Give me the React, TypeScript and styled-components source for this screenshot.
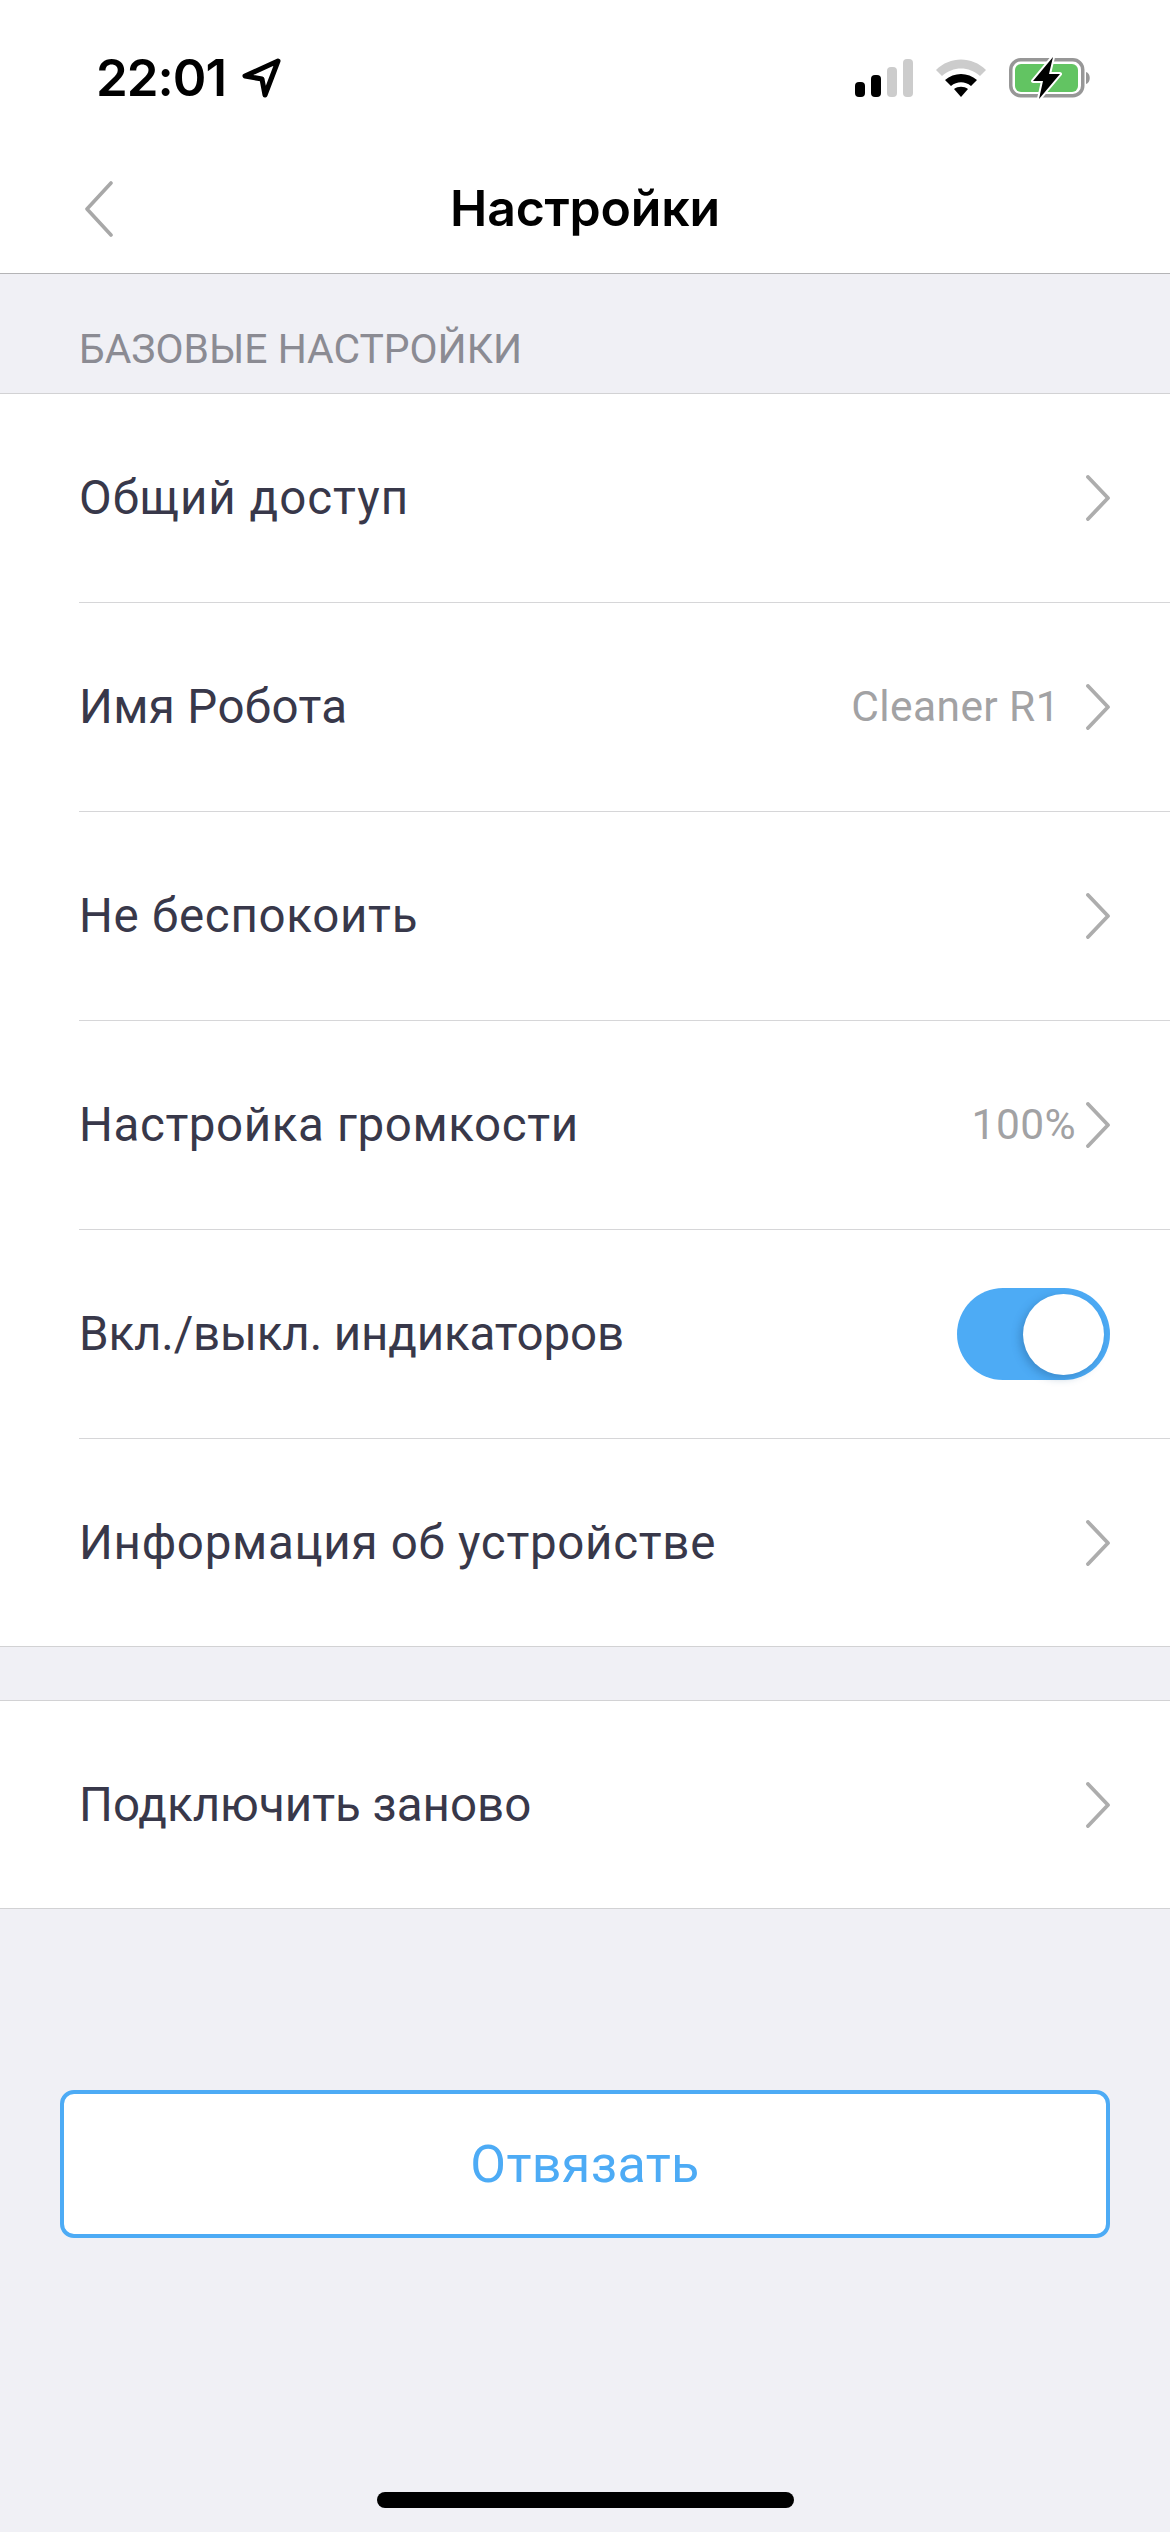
import React from "react";
import styled, { createGlobalStyle } from "styled-components";

const Global = createGlobalStyle`
  html, body { margin: 0; padding: 0; background: #f0f0f5; }
  * { box-sizing: border-box; }
`;

const Page = styled.div`
  width: 1170px;
  height: 2532px;
  background: #f0f0f5;
  display: flex;
  flex-direction: column;
  position: relative;
  overflow: hidden;
  font-family: Roboto, "Liberation Sans", sans-serif;
`;

const Header = styled.header`
  background: #fff;
  height: 274px;
  border-bottom: 1px solid #b4b4b6;
  display: flex;
  flex-direction: column;
`;

const StatusBar = styled.div`
  height: 156px;
  padding: 57px 79px 0 96px;
  display: flex;
  align-items: flex-start;
  justify-content: space-between;
`;

const TimeGroup = styled.div`
  display: flex;
  align-items: center;
  gap: 15px;
  height: 41px;
`;

const Time = styled.span`
  font-family: Inter, sans-serif;
  font-weight: 600;
  font-size: 51px;
  letter-spacing: -1px;
  color: #000;
  line-height: 41px;
`;

const StatusIcons = styled.div`
  display: flex;
  align-items: center;
  height: 41px;
  gap: 22px;
`;

const NavBar = styled.div`
  flex: 1;
  position: relative;
  display: flex;
  align-items: center;
  justify-content: center;
  padding-bottom: 14px;
`;

const Title = styled.h1`
  margin: 0;
  font-family: Inter, sans-serif;
  font-weight: 600;
  font-size: 50px;
  letter-spacing: -0.2px;
  line-height: 56px;
  color: #000;
`;

const BackIcon = styled.svg`
  position: absolute;
  left: 84px;
  top: 25px;
`;

const SectionLabel = styled.div`
  height: 119px;
  padding: 52px 0 0 79px;
  font-size: 40.8px;
  line-height: 46px;
  color: #8b8b93;
  background: #f0f0f5;
`;

const Group = styled.section<{ $mt?: number }>`
  background: #fff;
  border-top: 1px solid #d2d2d4;
  border-bottom: 1px solid #d2d2d4;
  margin-top: ${(p) => p.$mt ?? 0}px;
  padding-left: 79px;
`;

const Row = styled.div`
  height: 209px;
  display: flex;
  align-items: center;
  padding-right: 60px;
  border-bottom: 1px solid #d6d6d8;
  &:last-child { border-bottom: none; height: 207px; }
`;

const Label = styled.span<{ $track: number }>`
  flex: 1;
  font-size: 47.5px;
  line-height: 56px;
  color: #38384a;
  letter-spacing: ${(p) => p.$track}px;
`;

const Value = styled.span<{ $gap: number }>`
  font-size: 42.5px;
  line-height: 50px;
  color: #a2a2a4;
  letter-spacing: 0.4px;
  margin-right: ${(p) => p.$gap}px;
`;

const Toggle = styled.div`
  width: 153px;
  height: 92px;
  border-radius: 46px;
  background: #4dabf5;
  display: flex;
  align-items: center;
  justify-content: flex-end;
  padding-right: 6px;
`;

const Knob = styled.div`
  width: 81px;
  height: 81px;
  border-radius: 50%;
  background: #fff;
  box-shadow: -3px 3px 8px rgba(30, 80, 130, 0.35);
`;

const ButtonWrap = styled.div`
  padding: 181px 60px 0;
`;

const UnbindButton = styled.button`
  width: 100%;
  height: 148px;
  background: #fff;
  border: 4px solid #4dabf5;
  border-radius: 14px;
  color: #4dabf5;
  font-family: Roboto, sans-serif;
  font-size: 52px;
  letter-spacing: 0.35px;
  padding: 0;
`;

const HomeBar = styled.div`
  position: absolute;
  left: 377px;
  top: 2492px;
  width: 417px;
  height: 16px;
  border-radius: 8px;
  background: #000;
`;

const Chevron = () => (
  <svg width="24" height="46" viewBox="0 0 24 46" fill="none">
    <path d="M2 2 L22 23 L2 44" stroke="#adadad" strokeWidth="3.8" strokeLinecap="round" strokeLinejoin="round" />
  </svg>
);

const rows: { label: string; track: number; value?: string; gap?: number }[] = [
  { label: "Общий доступ", track: 1 },
  { label: "Имя Робота", track: 0.35, value: "Cleaner R1", gap: 26 },
  { label: "Не беспокоить", track: 0.7 },
  { label: "Настройка громкости", track: 0.6, value: "100%", gap: 10 },
];

export default function App() {
  return (
    <Page>
      <Global />
      <Header>
        <StatusBar>
          <TimeGroup>
            <Time>22:01</Time>
            <svg width="42" height="42" viewBox="0 0 42 42" fill="none">
              <path d="M37 4 L4 19 L21 22 L24 38 Z" stroke="#000" strokeWidth="5" strokeLinejoin="round" />
            </svg>
          </TimeGroup>
          <StatusIcons>
            <svg width="58" height="38" viewBox="0 0 58 38">
              <rect x="0" y="23" width="10" height="15" rx="4" fill="#000" />
              <rect x="16" y="16" width="10" height="22" rx="4" fill="#000" />
              <rect x="32" y="8" width="10" height="30" rx="4" fill="#ccc" />
              <rect x="48" y="0" width="10" height="38" rx="4" fill="#ccc" />
            </svg>
            <svg width="52" height="38" viewBox="0 0 52 38">
              <path d="M1 11 C15 -3 37 -3 51 11 L45 17 C34 7 18 7 7 17 Z" fill="#ccc" />
              <path d="M10 21 C19 13 33 13 42 21 L36 27 C30 22 22 22 16 27 Z" fill="#000" />
              <path d="M19 30 C23 27 29 27 33 30 L26 38 Z" fill="#000" />
            </svg>
            <svg width="82" height="44" viewBox="0 0 82 44">
              <rect x="1.75" y="3.75" width="72" height="36" rx="10" fill="none" stroke="#979797" strokeWidth="3.5" />
              <rect x="6" y="8" width="63" height="28" rx="6" fill="#62c462" />
              <path d="M77 16 C82 17 82 27 77 28 Z" fill="#979797" />
              <path d="M44 1 L24 25 L34 25 L30 43 L51 18 L40 18 Z" fill="#000" stroke="#fff" strokeWidth="4" strokeLinejoin="round" paintOrder="stroke" />
            </svg>
          </StatusIcons>
        </StatusBar>
        <NavBar>
          <BackIcon width="30" height="56" viewBox="0 0 30 56" fill="none">
            <path d="M27 2 L3 28 L27 54" stroke="#a8a8a8" strokeWidth="3.6" strokeLinecap="round" strokeLinejoin="round" />
          </BackIcon>
          <Title>Настройки</Title>
        </NavBar>
      </Header>
      <SectionLabel>БАЗОВЫЕ НАСТРОЙКИ</SectionLabel>
      <Group>
        {rows.map((r) => (
          <Row key={r.label}>
            <Label $track={r.track}>{r.label}</Label>
            {r.value && <Value $gap={r.gap ?? 0}>{r.value}</Value>}
            <Chevron />
          </Row>
        ))}
        <Row>
          <Label $track={-0.15}>Вкл./выкл. индикаторов</Label>
          <Toggle>
            <Knob />
          </Toggle>
        </Row>
        <Row>
          <Label $track={0.7}>Информация об устройстве</Label>
          <Chevron />
        </Row>
      </Group>
      <Group $mt={53}>
        <Row>
          <Label $track={0}>Подключить заново</Label>
          <Chevron />
        </Row>
      </Group>
      <ButtonWrap>
        <UnbindButton>Отвязать</UnbindButton>
      </ButtonWrap>
      <HomeBar />
    </Page>
  );
}
